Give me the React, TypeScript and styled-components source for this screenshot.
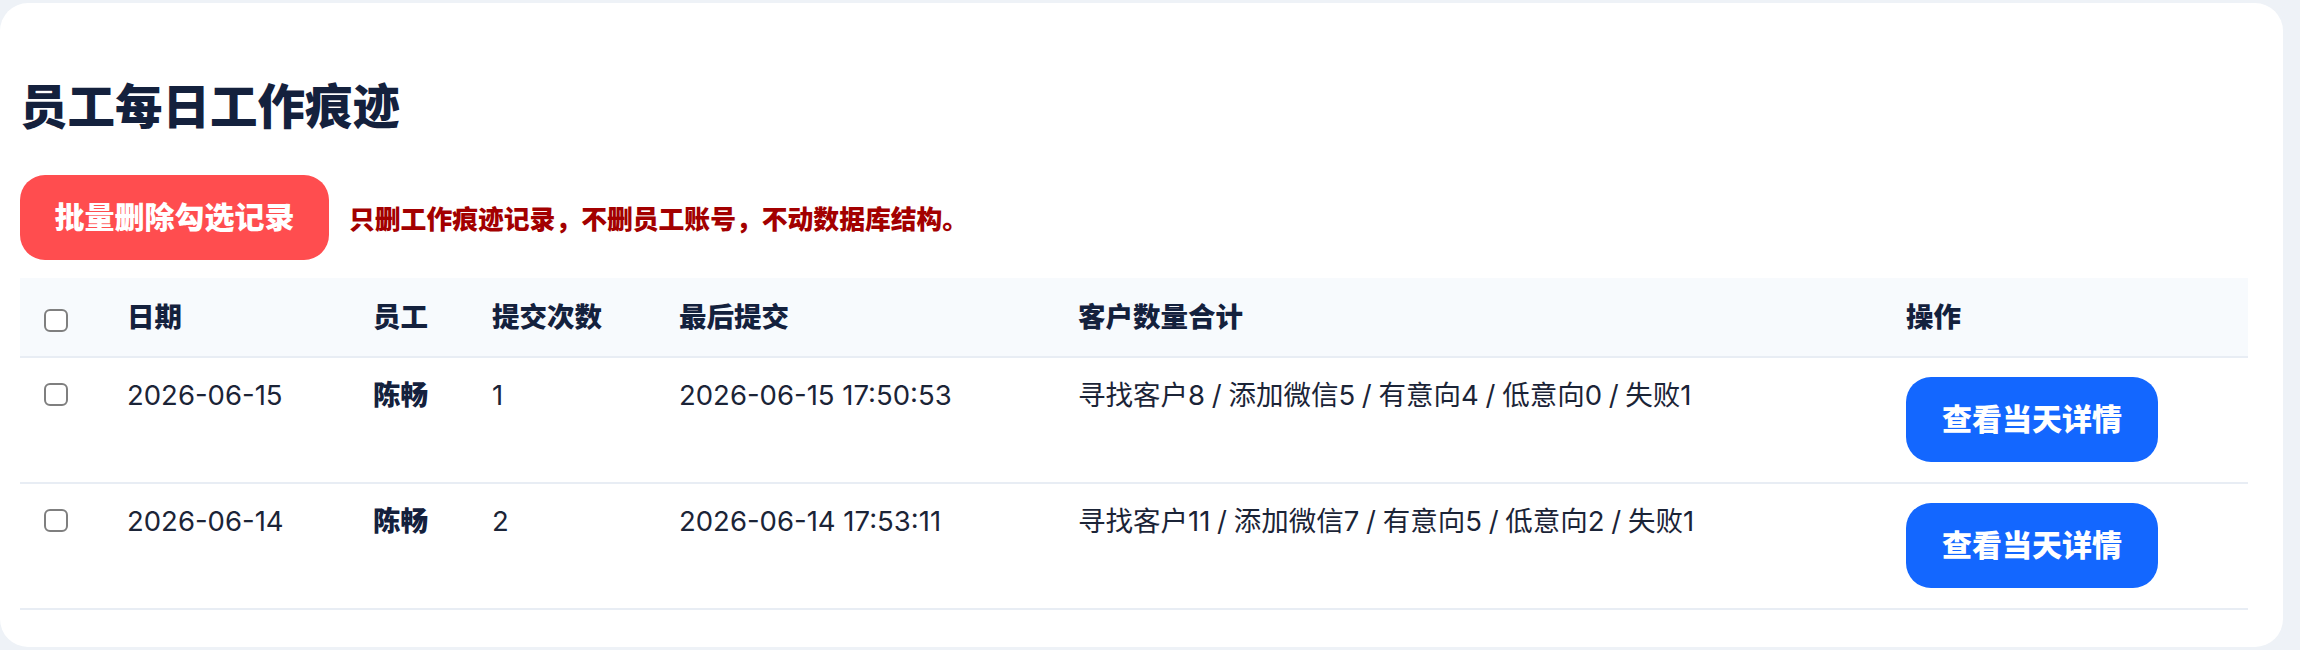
import React, { FC, useState } from "react";
import styled, { createGlobalStyle } from "styled-components";

const GlobalStyle = createGlobalStyle`
  html, body {
    margin: 0;
    padding: 0;
    background: #eef2f7;
    font-family: Inter, "Noto Sans CJK SC", sans-serif;
    color: #1b2437;
  }
  * { box-sizing: border-box; }
`;

interface IRecord {
  date: string;
  staff: string;
  count: number;
  last: string;
  summary: string;
}

const records: IRecord[] = [
  {
    date: "2026-06-15",
    staff: "陈畅",
    count: 1,
    last: "2026-06-15 17:50:53",
    summary: "寻找客户8 / 添加微信5 / 有意向4 / 低意向0 / 失败1",
  },
  {
    date: "2026-06-14",
    staff: "陈畅",
    count: 2,
    last: "2026-06-14 17:53:11",
    summary: "寻找客户11 / 添加微信7 / 有意向5 / 低意向2 / 失败1",
  },
];

const colWidths = [83, 246, 119, 187, 399, 828, 366];

const App: FC = () => {
  const [checked, setChecked] = useState<boolean[]>(records.map(() => false));
  const allChecked = checked.every((c) => c);

  const toggleAll = (): void => {
    setChecked(records.map(() => !allChecked));
  };

  const toggleOne = (index: number): void => {
    setChecked(checked.map((c, i) => (i === index ? !c : c)));
  };

  return (
    <>
      <GlobalStyle />
      <Card>
        <Title>员工每日工作痕迹</Title>
        <ActionBar>
          <ActionButton $tone="danger">批量删除勾选记录</ActionButton>
          <Note>只删工作痕迹记录，不删员工账号，不动数据库结构。</Note>
        </ActionBar>
        <Table>
          <colgroup>
            {colWidths.map((w, i) => (
              <Col key={i} $width={w} />
            ))}
          </colgroup>
          <thead>
            <tr>
              <Th>
                <Check type="checkbox" checked={allChecked} onChange={toggleAll} />
              </Th>
              <Th>日期</Th>
              <Th>员工</Th>
              <Th>提交次数</Th>
              <Th>最后提交</Th>
              <Th>客户数量合计</Th>
              <Th>操作</Th>
            </tr>
          </thead>
          <tbody>
            {records.map((r, i) => (
              <tr key={r.date}>
                <Td>
                  <Check
                    type="checkbox"
                    checked={checked[i]}
                    onChange={() => toggleOne(i)}
                  />
                </Td>
                <Td>{r.date}</Td>
                <Td $bold>{r.staff}</Td>
                <Td>{r.count}</Td>
                <Td>{r.last}</Td>
                <Td $tight>{r.summary}</Td>
                <Td>
                  <ActionButton $tone="primary">查看当天详情</ActionButton>
                </Td>
              </tr>
            ))}
          </tbody>
        </Table>
      </Card>
    </>
  );
};

export default App;

const Card = styled.section`
  margin: 3px 17px 5px 0;
  padding: 20px 35px 37px 20px;
  background: #ffffff;
  border-radius: 28px;
`;

const Title = styled.h1`
  margin: 55px 0 40px;
  font-size: 47.5px;
  line-height: 57px;
  font-weight: 900;
  color: #14213d;
`;

const ActionBar = styled.div`
  display: flex;
  align-items: center;
  gap: 20px;
  margin-bottom: 18px;
`;

const ActionButton = styled.button<{ $tone: "danger" | "primary" }>`
  border: none;
  border-radius: 25px;
  padding: 25px ${(p) => (p.$tone === "danger" ? "34.5px" : "36px")};
  font-family: inherit;
  font-size: 30px;
  line-height: 35px;
  font-weight: 900;
  color: #ffffff;
  cursor: pointer;
  white-space: nowrap;
  background: ${(p) => (p.$tone === "danger" ? "#ff4d4f" : "#1367ff")};
`;

const Note = styled.span`
  font-size: 25.8px;
  font-weight: 900;
  color: #a30000;
`;

const Table = styled.table`
  width: 2228px;
  border-collapse: collapse;
  table-layout: fixed;
`;

const Col = styled.col<{ $width: number }>`
  width: ${(p) => p.$width}px;
`;

const Th = styled.th`
  padding: 21px 0 21px 24px;
  background: #f7fafd;
  border-bottom: 2px solid #e8edf4;
  text-align: left;
  vertical-align: middle;
  font-size: 27.5px;
  line-height: 36px;
  font-weight: 900;
  color: #14213d;
`;

const Td = styled.td<{ $bold?: boolean; $tight?: boolean }>`
  padding: 19px 0 20px 24px;
  border-bottom: 2px solid #e8edf4;
  text-align: left;
  vertical-align: top;
  font-size: 27.5px;
  line-height: 36px;
  font-weight: ${(p) => (p.$bold ? 900 : 400)};
  color: ${(p) => (p.$bold ? "#14213d" : "#1b2437")};
  word-spacing: ${(p) => (p.$tight ? "-1px" : "normal")};
  white-space: nowrap;
`;

const Check = styled.input`
  appearance: none;
  display: block;
  width: 24px;
  height: 23px;
  margin: 6px 0 0;
  border: 2px solid #7f7f7f;
  border-radius: 6px;
  background: #ffffff;
  cursor: pointer;
  &:checked {
    background: #1367ff;
    border-color: #1367ff;
  }
`;
